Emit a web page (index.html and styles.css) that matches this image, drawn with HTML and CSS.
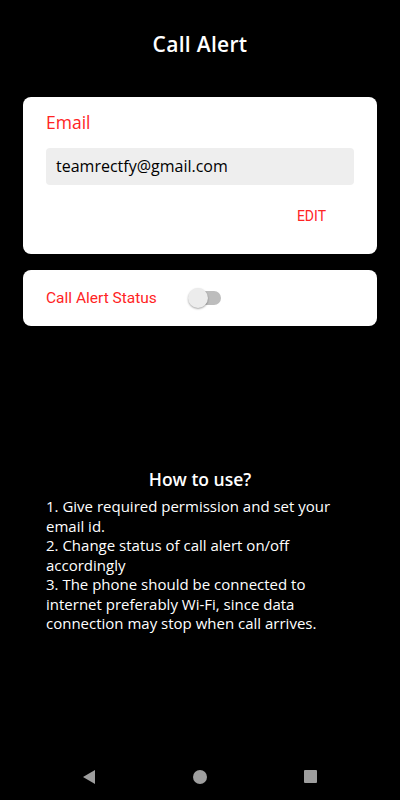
FILE: index.html
```html
<!DOCTYPE html>
<html lang="en">
<head>
    <meta charset="UTF-8">
    <meta name="viewport" content="width=device-width, initial-scale=1.0">
    <title>Call Alert</title>
    <link rel="stylesheet" href="styles.css">
</head>
<body>

<header>
    <h1>Call Alert</h1>
</header>

<main class="content">
    <div class="card email-card">
        <p class="label">Email</p>
        <div class="email-box">teamrectfy@gmail.com</div>
        <div class="actions">
            <button class="text-btn">EDIT</button>
        </div>
    </div>

    <div class="card status-card">
        <span class="status-label">Call Alert Status</span>
        <span class="switch">
            <span class="track"></span>
            <span class="thumb"></span>
        </span>
    </div>

    <section class="howto">
        <h2>How to use?</h2>
        <p>1. Give required permission and set your email id.<br>
        2. Change status of call alert on/off accordingly<br>
        3. The phone should be connected to internet preferably Wi-Fi, since data connection may stop when call arrives.</p>
    </section>
</main>

<nav class="navbar">
    <svg width="13" height="14" viewBox="0 0 13 14"><polygon points="12,0 12,14 0,7" fill="#9e9e9e"/></svg>
    <span class="nav-home"></span>
    <span class="nav-recent"></span>
</nav>

</body>
</html>
```

FILE: styles.css
```css
body {
    margin: 0;
    background-color: #000;
    color: #fff;
    font-family: "Open Sans", Lato, sans-serif;
    min-height: 800px;
    display: flex;
    flex-direction: column;
}

header {
    padding-top: 30px;
    text-align: center;
}

header h1 {
    margin: 0;
    font-size: 21px;
    line-height: 28px;
    font-weight: 600;
    letter-spacing: 0.3px;
}

.content {
    padding: 0 23px;
}

.card {
    background-color: #fff;
    border-radius: 8px;
}

.email-card {
    margin-top: 39px;
    padding: 13px 23px 20px 23px;
}

.label {
    margin: 0;
    color: #ff2424;
    font-size: 17.5px;
    line-height: 24px;
}

.email-box {
    margin-top: 14px;
    height: 37px;
    line-height: 37px;
    padding: 0 10px;
    background-color: #eeeeee;
    border-radius: 4px;
    color: #000;
    font-size: 16px;
}

.actions {
    display: flex;
    justify-content: flex-end;
    margin-top: 13px;
}

.text-btn {
    background: none;
    border: none;
    padding: 8px 12px;
    margin-right: 16px;
    font-family: Roboto, sans-serif;
    font-size: 14px;
    line-height: 20px;
    color: #ff2424;
}

.status-card {
    margin-top: 16px;
    height: 56px;
    padding: 0 23px;
    display: flex;
    align-items: center;
}

.status-label {
    font-family: Roboto, sans-serif;
    font-size: 15.5px;
    color: #ff2424;
}

.switch {
    position: relative;
    width: 34px;
    height: 20px;
    margin-left: 31px;
}

.track {
    position: absolute;
    left: 3px;
    top: 3px;
    width: 30px;
    height: 14px;
    border-radius: 7px;
    background-color: #bdbdbd;
}

.thumb {
    position: absolute;
    left: 0;
    top: 0;
    width: 20px;
    height: 20px;
    border-radius: 50%;
    background-color: #ececec;
    box-shadow: 0 1px 2px rgba(0, 0, 0, 0.35);
}

.howto {
    margin-top: 141px;
    padding: 0 23px;
}

.howto h2 {
    margin: 0 -23px;
    text-align: center;
    font-size: 17.5px;
    line-height: 24px;
    font-weight: 600;
}

.howto p {
    margin: 6px 0 0 0;
    font-size: 15px;
    line-height: 19.5px;
}

.navbar {
    margin-top: auto;
    height: 47px;
    display: flex;
    align-items: center;
    justify-content: space-between;
    padding: 0 83px 0 83px;
}

.nav-home {
    width: 14px;
    height: 14px;
    border-radius: 50%;
    background-color: #9e9e9e;
}

.nav-recent {
    width: 13px;
    height: 13px;
    border-radius: 1px;
    background-color: #9e9e9e;
}
```
